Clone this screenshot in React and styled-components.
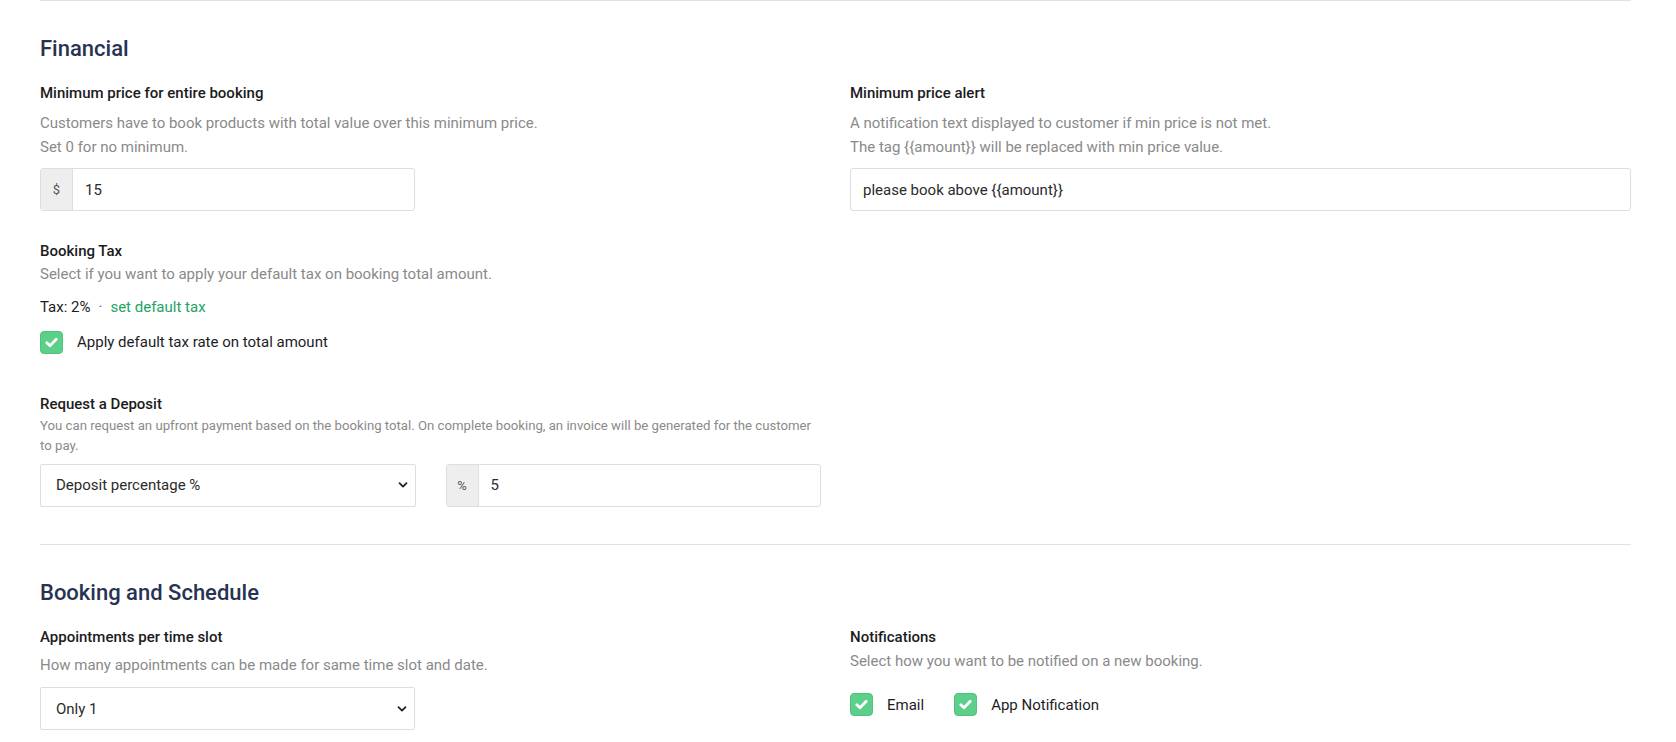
import React from "react";
import styled, { createGlobalStyle } from "styled-components";

const GlobalStyle = createGlobalStyle`
  html, body {
    margin: 0;
    padding: 0;
    background: #fff;
    font-family: Roboto, "Liberation Sans", sans-serif;
    color: #1d1d1f;
  }
  * { box-sizing: border-box; }
`;

const Page = styled.div`
  padding: 0 45px 0 40px;
`;

const Section = styled.section`
  border-top: 1px solid #e2e2e2;
  padding-top: 34px;
  padding-bottom: 37px;
`;

const Heading = styled.h2`
  margin: 0 0 19px;
  font-size: 22px;
  line-height: 28px;
  font-weight: 500;
  color: #283252;
`;

const Row = styled.div`
  display: grid;
  grid-template-columns: 1fr 1fr;
  column-gap: 29px;
  align-items: start;
`;

const Column = styled.div`
  display: flex;
  flex-direction: column;
`;

const Field = styled.div`
  display: flex;
  flex-direction: column;
  margin-top: ${({ $top }) => $top || 0}px;
`;

const Label = styled.div`
  font-size: 15px;
  line-height: 22px;
  font-weight: 500;
  color: #1b1b1d;
`;

const Desc = styled.div`
  margin-top: ${({ $gap }) => $gap}px;
  font-size: ${({ $small }) => ($small ? 13.2 : 15)}px;
  line-height: ${({ $small }) => ($small ? 20 : 23.5)}px;
  color: #8a8a8a;
`;

const InputGroup = styled.div`
  display: flex;
  height: 43px;
  margin-top: ${({ $gap }) => $gap}px;
  width: ${({ $half }) => ($half ? "375px" : "100%")};
  border: 1px solid #dedede;
  border-radius: 3px;
  overflow: hidden;
`;

const Addon = styled.span`
  width: 32px;
  flex: none;
  display: flex;
  align-items: center;
  justify-content: center;
  background: #eeeeee;
  border-right: 1px solid #dedede;
  font-size: 13px;
  color: #555;
`;

const TextValue = styled.span`
  flex: 1;
  display: flex;
  align-items: center;
  padding: 0 12px;
  font-size: 15px;
  color: #2b2b2b;
`;

const SelectBox = styled.div`
  position: relative;
  display: flex;
  align-items: center;
  height: 43px;
  width: ${({ $half }) => ($half ? "375px" : "100%")};
  margin-top: ${({ $gap }) => $gap || 0}px;
  padding: 0 15px;
  border: 1px solid #dedede;
  border-radius: 2px;
  font-size: 15px;
  color: #2b2b2b;
`;

const Chevron = styled.svg`
  position: absolute;
  right: 6px;
  top: 50%;
  transform: translateY(-50%);
`;

const InlineRow = styled.div`
  display: grid;
  grid-template-columns: 1fr 1fr;
  column-gap: 30px;
  margin-top: 8px;
`;

const TaxLine = styled.div`
  margin-top: 9px;
  font-size: 15px;
  line-height: 22px;
  color: #1d1d1f;
`;

const Dot = styled.span`
  margin: 0 8px;
  color: #666;
`;

const GreenLink = styled.a`
  color: #22a366;
  text-decoration: none;
`;

const Checks = styled.div`
  display: flex;
  align-items: center;
  gap: 30px;
  margin-top: ${({ $gap }) => $gap}px;
`;

const CheckItem = styled.label`
  display: flex;
  align-items: center;
  gap: 14px;
  font-size: 15px;
  color: #1d1d1f;
`;

const Box = styled.span`
  width: 23px;
  height: 23px;
  border-radius: 4px;
  background: #5ccf8a;
  border: 1px solid #50c27e;
  display: flex;
  align-items: center;
  justify-content: center;
`;

function Check({ children }) {
  return (
    <CheckItem>
      <Box>
        <svg width="13" height="11" viewBox="0 0 13 11">
          <path d="M1.8 5.8 L5 8.7 L11.2 2.2" fill="none" stroke="#fff" strokeWidth="2.8" strokeLinecap="round" strokeLinejoin="round" />
        </svg>
      </Box>
      {children}
    </CheckItem>
  );
}

function Select({ children, ...rest }) {
  return (
    <SelectBox {...rest}>
      {children}
      <Chevron width="12" height="12" viewBox="0 0 12 12">
        <path d="M2.5 4.2 L6 7.6 L9.5 4.2" fill="none" stroke="#222" strokeWidth="1.8" strokeLinecap="round" strokeLinejoin="round" />
      </Chevron>
    </SelectBox>
  );
}

export default function App() {
  return (
    <Page>
      <GlobalStyle />
      <Section>
        <Heading>Financial</Heading>
        <Row>
          <Column>
            <Field>
              <Label>Minimum price for entire booking</Label>
              <Desc $gap={8}>
                Customers have to book products with total value over this minimum price.
                <br />
                Set 0 for no minimum.
              </Desc>
              <InputGroup $gap={9} $half>
                <Addon>$</Addon>
                <TextValue>15</TextValue>
              </InputGroup>
            </Field>
            <Field $top={29}>
              <Label>Booking Tax</Label>
              <Desc $gap={1}>Select if you want to apply your default tax on booking total amount.</Desc>
              <TaxLine>
                Tax: 2%<Dot>·</Dot>
                <GreenLink href="#">set default tax</GreenLink>
              </TaxLine>
              <Checks $gap={13}>
                <Check>Apply default tax rate on total amount</Check>
              </Checks>
            </Field>
            <Field $top={39}>
              <Label>Request a Deposit</Label>
              <Desc $gap={1} $small>
                You can request an upfront payment based on the booking total. On complete booking, an invoice will be generated for the customer to pay.
              </Desc>
              <InlineRow>
                <Select>Deposit percentage %</Select>
                <InputGroup $gap={0}>
                  <Addon>%</Addon>
                  <TextValue>5</TextValue>
                </InputGroup>
              </InlineRow>
            </Field>
          </Column>
          <Column>
            <Field>
              <Label>Minimum price alert</Label>
              <Desc $gap={8}>
                A notification text displayed to customer if min price is not met.
                <br />
                The tag {"{{amount}}"} will be replaced with min price value.
              </Desc>
              <InputGroup $gap={9}>
                <TextValue>please book above {"{{amount}}"}</TextValue>
              </InputGroup>
            </Field>
          </Column>
        </Row>
      </Section>
      <Section>
        <Heading>Booking and Schedule</Heading>
        <Row>
          <Column>
            <Field>
              <Label>Appointments per time slot</Label>
              <Desc $gap={6}>How many appointments can be made for same time slot and date.</Desc>
              <Select $half $gap={10}>Only 1</Select>
            </Field>
          </Column>
          <Column>
            <Field>
              <Label>Notifications</Label>
              <Desc $gap={2}>Select how you want to be notified on a new booking.</Desc>
              <Checks $gap={20}>
                <Check>Email</Check>
                <Check>App Notification</Check>
              </Checks>
            </Field>
          </Column>
        </Row>
      </Section>
    </Page>
  );
}
